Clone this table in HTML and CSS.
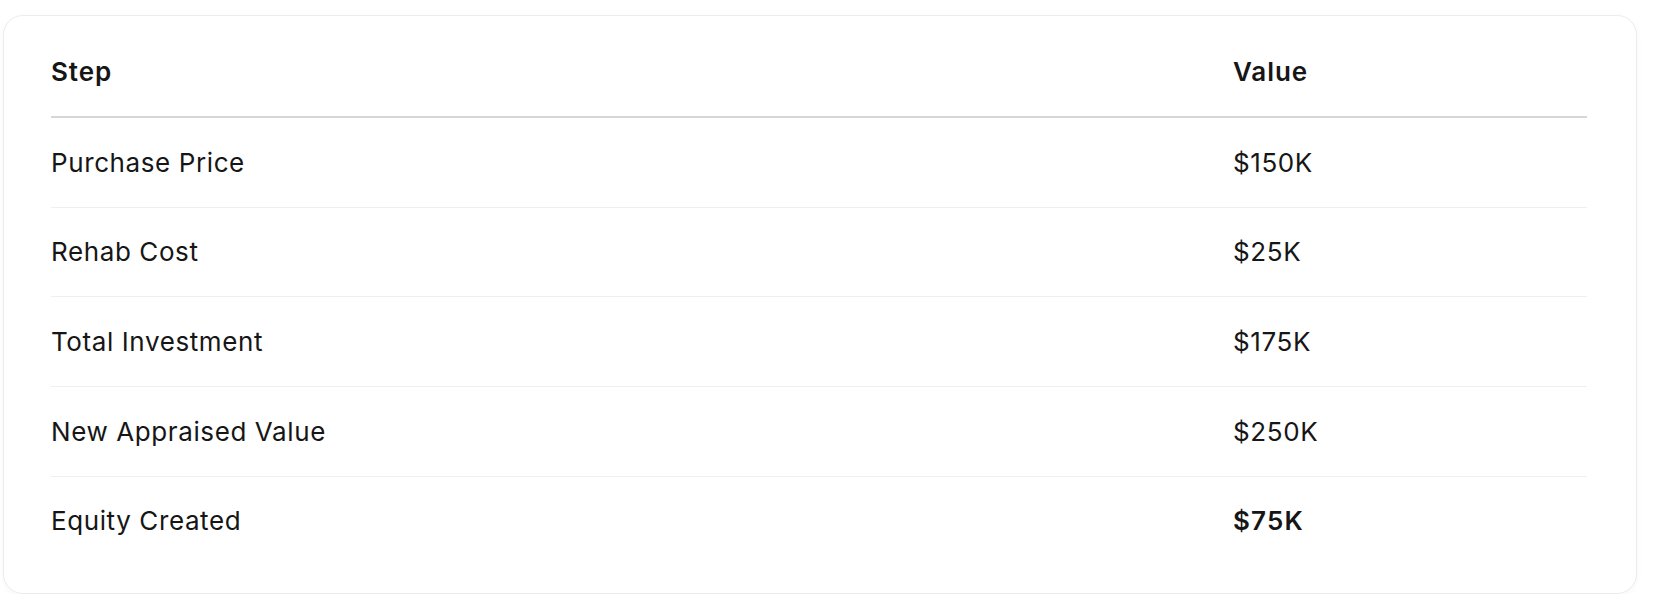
FILE: index.html
```html
<!DOCTYPE html>
<html lang="en">
<head>
<meta charset="utf-8">
<title>Equity Table</title>
<link rel="stylesheet" href="styles.css">
</head>
<body>
<div class="card">
  <table class="tbl">
    <thead>
      <tr><th class="c1">Step</th><th class="c2">Value</th></tr>
    </thead>
    <tbody>
      <tr><td>Purchase Price</td><td>$150K</td></tr>
      <tr><td>Rehab Cost</td><td>$25K</td></tr>
      <tr><td>Total Investment</td><td>$175K</td></tr>
      <tr><td>New Appraised Value</td><td>$250K</td></tr>
      <tr class="last"><td>Equity Created</td><td class="strong">$75K</td></tr>
    </tbody>
  </table>
</div>
</body>
</html>
```

FILE: styles.css
```css
html, body {
  margin: 0;
  padding: 0;
  background: #ffffff;
}
body {
  font-family: Inter, "Noto Sans", "Liberation Sans", sans-serif;
  color: #161616;
  padding: 15px 20px 0 3px;
}
.card {
  width: 1537px;
  background: #fff;
  border: 1px solid #ececec;
  border-radius: 20px;
  box-shadow: 0 2px 6px rgba(0, 0, 0, 0.03);
  padding: 36px 48px 28px 47px;
}
.tbl {
  width: 1536px;
  border-collapse: collapse;
  table-layout: fixed;
  font-size: 26px;
  line-height: 39px;
  letter-spacing: 0.6px;
}
.c1 { width: 1182px; }
th {
  text-align: left;
  font-weight: 600;
  letter-spacing: 0.9px;
  padding: 0 0 25px 0;
  border-bottom: 2px solid #d6d6d6;
}
td {
  padding: 24.83px 0;
  border-bottom: 1px solid #efefef;
  font-weight: 400;
}
tr.last td { border-bottom: none; }
td.strong { font-weight: 600; letter-spacing: 1.2px; }
```
